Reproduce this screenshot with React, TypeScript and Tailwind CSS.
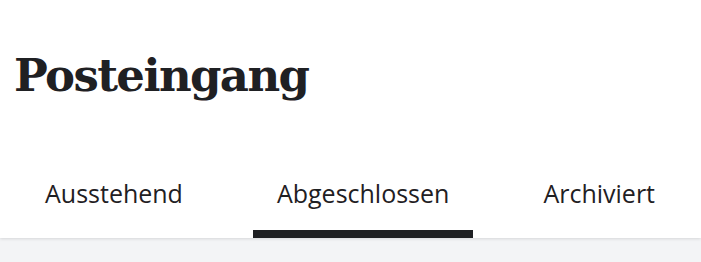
const tabs = ["Ausstehend", "Abgeschlossen", "Archiviert"];

export default function App() {
  const active = 1;
  return (
    <div className="min-h-screen bg-[#f3f4f6]">
      <header className="bg-white shadow-[0_1px_3px_rgba(0,0,0,0.12)]">
        <h1 className="pt-[44px] pl-[14px] text-[45px] leading-[64px] font-bold tracking-[-1.6px] text-[#1f2023] font-['DejaVu_Serif',serif]">
          Posteingang
        </h1>
        <nav className="mt-[70px] flex gap-[46px] pl-[21px]">
          {tabs.map((t, i) => (
            <button
              key={t}
              className={
                "px-6 pb-[22px] border-b-[8px] text-[25px] leading-[30px] text-[#1f2023] font-['Open_Sans',sans-serif] " +
                (i === active ? "border-[#1f2023]" : "border-transparent")
              }
            >
              {t}
            </button>
          ))}
        </nav>
      </header>
    </div>
  );
}
